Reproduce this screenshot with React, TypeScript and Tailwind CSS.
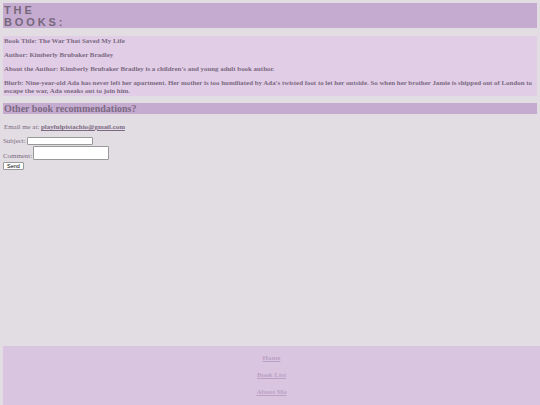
export default function App() {
  return (
    <div className="min-h-[405px] w-[540px] bg-[#e2dde3] pt-[3px] pl-[3px] flex flex-col font-['Liberation_Serif',serif] text-[#7b6a82] overflow-hidden">
      <header className="w-[534px] h-[25px] bg-[#c6abd1] px-[1px] pt-[1px]">
        <h1 className="font-['Liberation_Sans',sans-serif] font-bold text-[11px] leading-[12px] tracking-[2.9px] text-[#75677a]">
          THE
          <br />
          BOOKS:
        </h1>
      </header>

      <section className="mt-[8px] w-[534px] bg-[#e1cde6] pl-[1px] pr-[2px] pt-[1px] pb-[1px] font-bold text-[6.9px] leading-[8px]">
        <p>Book Title: The War That Saved My Life</p>
        <p className="mt-[6px]">Author: Kimberly Brubaker Bradley</p>
        <p className="mt-[6px]">About the Author: Kimberly Brubaker Bradley is a children's and young adult book author.</p>
        <p className="mt-[6px]">
          Blurb: Nine-year-old Ada has never left her apartment. Her mother is too humiliated by Ada's twisted foot to let her outside. So when her brother Jamie is shipped out of London to escape the war, Ada sneaks out to join him.
        </p>
      </section>

      <h2 className="mt-[7px] w-[534px] h-[11px] bg-[#c6abd1] px-[1px] font-bold text-[10px] leading-[11px]">
        Other book recommendations?
      </h2>

      <div className="mt-[9px] text-[6.9px] leading-[8px] pl-[1px]">
        Email me at: <a className="font-bold underline">playfulpistachio@gmail.com</a>
      </div>

      <form className="mt-[6px] text-[6.9px] leading-[8px] flex flex-col items-start">
        <div className="flex items-center">
          <span>Subject:</span>
          <input className="ml-[1px] w-[66px] h-[8px] bg-white border border-[#999] rounded-[1px]" />
        </div>
        <div className="flex items-end mt-[1px]">
          <span>Comment:</span>
          <textarea className="ml-[1px] w-[76px] h-[14px] bg-white border border-[#999] rounded-[1px] resize-none" />
        </div>
        <button
          type="button"
          className="mt-[2px] h-[8px] px-[3px] bg-white border border-[#999] rounded-[1px] font-['Liberation_Sans',sans-serif] text-[5.5px] leading-[6px] text-black"
        >
          Send
        </button>
      </form>

      <footer className="mt-auto w-[537px] h-[59px] bg-[#dac5e0] flex flex-col items-center pt-[8px] gap-[9px] text-[7px] leading-[8px] font-bold text-[#bba2c5]">
        <a className="underline">Home</a>
        <a className="underline">Book List</a>
        <a className="underline">About Me</a>
      </footer>
    </div>
  )
}
